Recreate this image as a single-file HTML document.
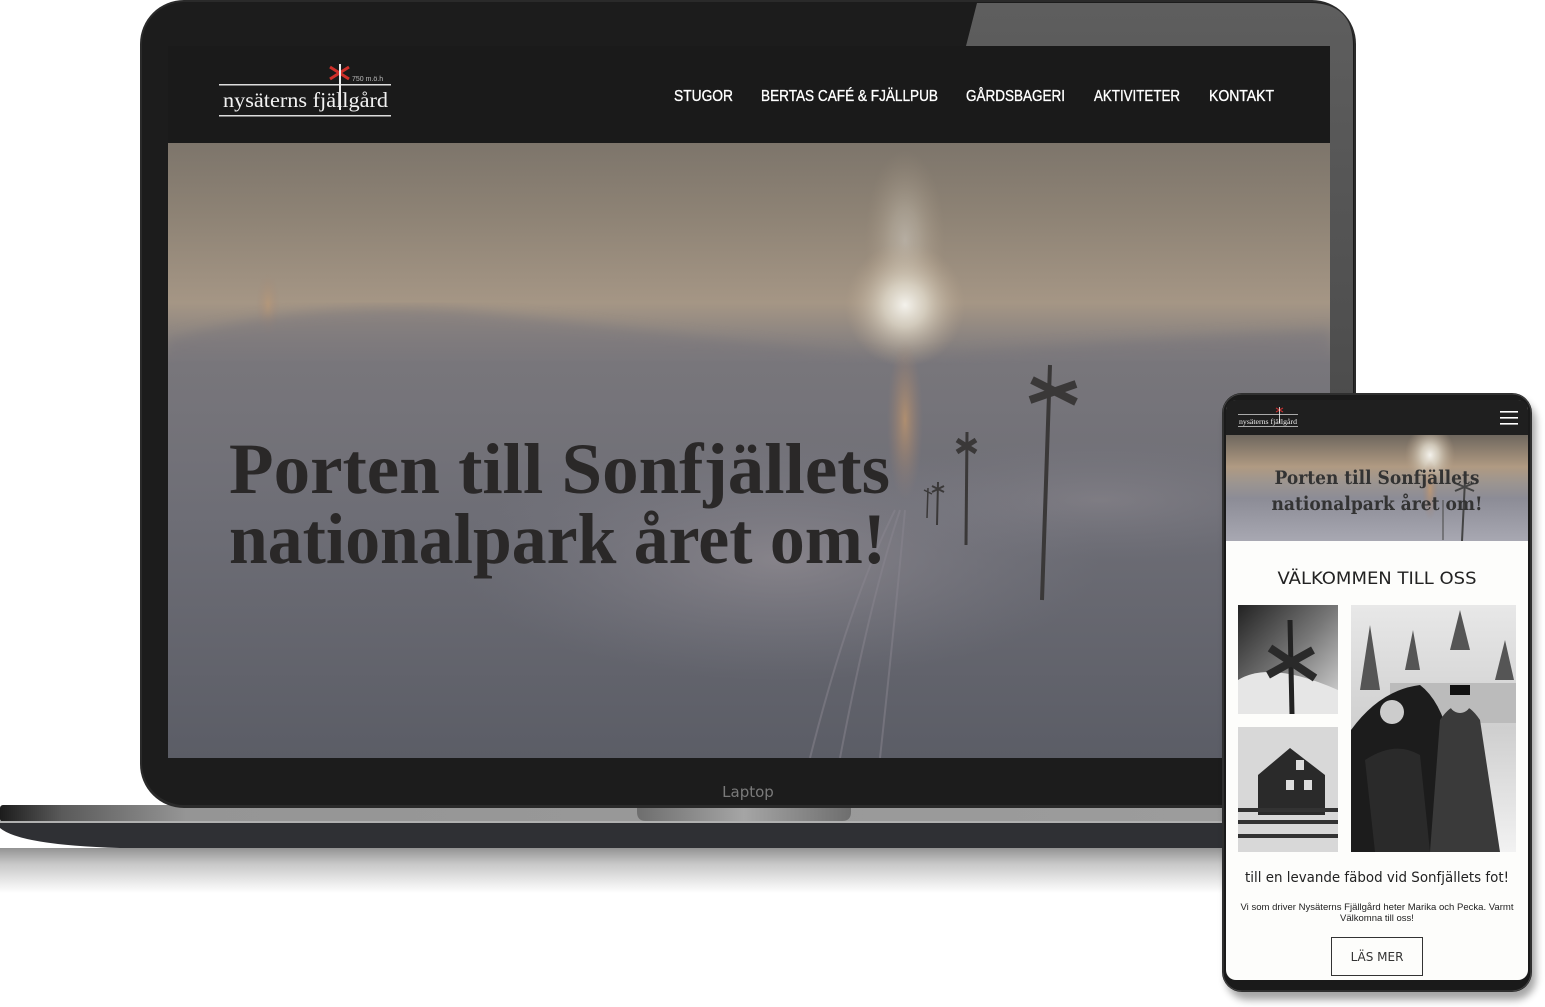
<!DOCTYPE html>
<html><head><meta charset="utf-8"><style>
html,body{margin:0;padding:0;background:#fff;width:1545px;height:1007px;overflow:hidden}
svg{display:block}
</style></head><body>
<svg width="1545" height="1007" viewBox="0 0 1545 1007" xmlns="http://www.w3.org/2000/svg">
<defs>
<linearGradient id="sky" x1="0" y1="0" x2="0" y2="1">
<stop offset="0" stop-color="#7d756b"/><stop offset="0.12" stop-color="#8e8375"/>
<stop offset="0.26" stop-color="#a59685"/><stop offset="0.31" stop-color="#8e8681"/>
<stop offset="0.36" stop-color="#78767b"/><stop offset="0.6" stop-color="#6e6e76"/>
<stop offset="1" stop-color="#5b5d66"/></linearGradient>
<radialGradient id="sun" cx="0.5" cy="0.5" r="0.5"><stop offset="0" stop-color="#f4f2ec"/><stop offset="0.35" stop-color="#dcd5c6" stop-opacity="0.85"/><stop offset="1" stop-color="#b8a48c" stop-opacity="0"/></radialGradient>
<radialGradient id="pillar" cx="0.5" cy="0.5" r="0.5"><stop offset="0" stop-color="#c89a6c" stop-opacity="0.7"/><stop offset="1" stop-color="#a08070" stop-opacity="0"/></radialGradient>
<radialGradient id="snow" cx="0.5" cy="0.5" r="0.5"><stop offset="0" stop-color="#9a949a" stop-opacity="0.6"/><stop offset="1" stop-color="#80808a" stop-opacity="0"/></radialGradient>
<linearGradient id="base" x1="0" y1="0" x2="1" y2="0"><stop offset="0" stop-color="#1c1c1c"/><stop offset="0.05" stop-color="#5a5a5a"/><stop offset="0.15" stop-color="#959595"/><stop offset="1" stop-color="#9c9c9c"/></linearGradient>
<linearGradient id="notch" x1="0" y1="0" x2="1" y2="0"><stop offset="0" stop-color="#6e6e6e"/><stop offset="0.5" stop-color="#a5a5a5"/><stop offset="1" stop-color="#6e6e6e"/></linearGradient>
<linearGradient id="refl" x1="0" y1="0" x2="0" y2="1"><stop offset="0" stop-color="#3a3a3a"/><stop offset="0.35" stop-color="#9a9a9a"/><stop offset="1" stop-color="#ffffff"/></linearGradient>
<linearGradient id="glare" x1="0" y1="0" x2="0" y2="1"><stop offset="0" stop-color="#5e5e5e"/><stop offset="1" stop-color="#3a3a3a"/></linearGradient>
<linearGradient id="psky" x1="0" y1="0" x2="0" y2="1"><stop offset="0" stop-color="#6f675e"/><stop offset="0.3" stop-color="#b09a82"/><stop offset="0.45" stop-color="#9c9590"/><stop offset="0.6" stop-color="#8c8c96"/><stop offset="1" stop-color="#a8a8b2"/></linearGradient>
<linearGradient id="ph1" x1="0" y1="0" x2="1" y2="1"><stop offset="0" stop-color="#222"/><stop offset="0.5" stop-color="#777"/><stop offset="1" stop-color="#ddd"/></linearGradient>
<linearGradient id="ph2" x1="0" y1="0" x2="0" y2="1"><stop offset="0" stop-color="#e8e8e8"/><stop offset="0.5" stop-color="#cfcfcf"/><stop offset="1" stop-color="#f2f2f2"/></linearGradient>
<filter id="blur"><feGaussianBlur stdDeviation="6"/></filter>
<filter id="sh"><feGaussianBlur stdDeviation="4"/></filter>
<clipPath id="hero"><rect x="168" y="143" width="1162" height="615"/></clipPath>
<clipPath id="phero"><rect x="1226" y="435" width="302" height="106"/></clipPath>
</defs>

<path d="M0 822 L1240 822 L1240 848 L120 848 Q20 845 0 828 Z" fill="#2f3034"/>
<rect x="0" y="848" width="1240" height="45" fill="url(#refl)" opacity="0.55"/>
<rect x="0" y="805" width="1240" height="17" rx="3" fill="url(#base)"/>
<rect x="0" y="821" width="1240" height="2" fill="#b0b0b0"/>
<path d="M637 805 L851 805 L851 812 Q851 821 842 821 L646 821 Q637 821 637 812 Z" fill="url(#notch)"/>

<rect x="140" y="0" width="1216" height="808" rx="44" fill="#2a2a2a"/>
<rect x="142" y="2" width="1212" height="803" rx="42" fill="#1c1c1c"/>
<path d="M977 3 L1310 3 Q1353 3 1353 46 L1353 805 L1330 805 L1330 46 L966 46 Z" fill="url(#glare)"/>
<rect x="168" y="46" width="1162" height="712" fill="#1a1a1a"/>
<text x="748" y="797" text-anchor="middle" font-family="DejaVu Sans, sans-serif" font-size="15" fill="#7a7a7a">Laptop</text>

<g font-family="Liberation Sans, sans-serif" font-size="16" fill="#fff" stroke="#fff" stroke-width="0.35">
<text x="674" y="101" textLength="59" lengthAdjust="spacingAndGlyphs">STUGOR</text>
<text x="761" y="101" textLength="177" lengthAdjust="spacingAndGlyphs">BERTAS CAFÉ &amp; FJÄLLPUB</text>
<text x="966" y="101" textLength="99" lengthAdjust="spacingAndGlyphs">GÅRDSBAGERI</text>
<text x="1094" y="101" textLength="86" lengthAdjust="spacingAndGlyphs">AKTIVITETER</text>
<text x="1209" y="101" textLength="65" lengthAdjust="spacingAndGlyphs">KONTAKT</text>
</g>
<g>
<rect x="219" y="84" width="172" height="1.5" fill="#ddd"/>
<rect x="219" y="115" width="172" height="1.5" fill="#ddd"/>
<text x="223" y="107" font-family="Liberation Serif, serif" font-size="21" fill="#f2f2f2" textLength="165" lengthAdjust="spacingAndGlyphs">nysäterns fjällgård</text>
<path d="M330 67 L349 79 M349 67 L330 79" stroke="#d0302a" stroke-width="3"/>
<rect x="339" y="64" width="2" height="46" fill="#eee"/>
<text x="352" y="81" font-family="Liberation Sans, sans-serif" font-size="7" fill="#bbb">750 m.ö.h</text>
</g>

<g clip-path="url(#hero)">
<rect x="168" y="143" width="1162" height="615" fill="url(#sky)"/>
<ellipse cx="905" cy="240" rx="40" ry="90" fill="url(#sun)" opacity="0.35"/>
<ellipse cx="905" cy="305" rx="60" ry="62" fill="url(#sun)"/>
<ellipse cx="905" cy="420" rx="18" ry="80" fill="url(#pillar)"/>
<ellipse cx="268" cy="305" rx="12" ry="32" fill="url(#pillar)" opacity="0.6"/>
<path d="M168 340 Q300 300 460 310 Q650 330 900 360 Q1100 340 1330 330 L1330 360 L168 360 Z" fill="#77757b" opacity="0.5" filter="url(#blur)"/>
<ellipse cx="780" cy="560" rx="320" ry="120" fill="url(#snow)"/>
<ellipse cx="1100" cy="500" rx="250" ry="60" fill="url(#snow)" opacity="0.6"/>
<path d="M810 758 Q850 600 895 510 M840 758 Q870 600 900 510 M880 758 Q895 620 905 510" stroke="#8a8690" stroke-width="2" fill="none" opacity="0.5"/>
<g stroke="#3a3838" fill="none">
<path d="M1050 365 L1042 600" stroke-width="4"/>
<path d="M1032 380 L1076 402 M1030 400 L1076 384" stroke-width="8"/>
<path d="M967 432 L966 545" stroke-width="3"/>
<path d="M957 440 L976 452 M957 452 L976 440" stroke-width="5"/>
<path d="M938 482 L937 525 M932 486 L944 492 M932 492 L944 486" stroke-width="2"/>
<path d="M928 488 L927 518 M924 490 L932 494" stroke-width="1.5"/>
</g>
<g font-family="Liberation Serif, serif" font-weight="bold" font-size="72" fill="#2a2828">
<text x="229" y="493" textLength="661" lengthAdjust="spacingAndGlyphs">Porten till Sonfjällets</text>
<text x="229" y="563" textLength="657" lengthAdjust="spacingAndGlyphs">nationalpark året om!</text>
</g>
</g>

<rect x="1226" y="400" width="310" height="600" rx="22" fill="#000" opacity="0.35" filter="url(#sh)"/>
<rect x="1222" y="393" width="310" height="599" rx="20" fill="#1a1a1a"/>
<rect x="1223" y="394" width="308" height="597" rx="19" fill="none" stroke="#444" stroke-width="1"/>
<rect x="1226" y="400" width="302" height="580" rx="10" fill="#fdfdfb"/>
<path d="M1226 410 Q1226 400 1236 400 L1518 400 Q1528 400 1528 410 L1528 435 L1226 435 Z" fill="#1f1f1f"/>
<rect x="1238" y="414" width="60" height="0.8" fill="#ccc"/>
<rect x="1238" y="426" width="60" height="0.8" fill="#ccc"/>
<text x="1239" y="424" font-family="Liberation Serif, serif" font-size="7.5" fill="#eee" textLength="58" lengthAdjust="spacingAndGlyphs">nysäterns fjällgård</text>
<path d="M1276 408 L1283 412 M1283 408 L1276 412" stroke="#c03030" stroke-width="1.2"/>
<rect x="1279" y="407" width="0.8" height="16" fill="#eee"/>
<g fill="#fff"><rect x="1500" y="411" width="18" height="1.6"/><rect x="1500" y="417" width="18" height="1.6"/><rect x="1500" y="423" width="18" height="1.6"/></g>
<g clip-path="url(#phero)">
<rect x="1226" y="435" width="302" height="106" fill="url(#psky)"/>
<ellipse cx="1430" cy="455" rx="25" ry="30" fill="url(#sun)"/>
<ellipse cx="1430" cy="490" rx="8" ry="30" fill="url(#pillar)"/>
<path d="M1465 480 L1462 541 M1455 483 L1474 491 M1455 491 L1474 483" stroke="#444" stroke-width="2" fill="none"/>
<path d="M1443 500 L1443 540" stroke="#555" stroke-width="1.2"/>
<text x="1377" y="484" text-anchor="middle" font-family="DejaVu Serif, serif" font-weight="bold" font-size="19" fill="#333" textLength="205" lengthAdjust="spacingAndGlyphs">Porten till Sonfjällets</text>
<text x="1377" y="510" text-anchor="middle" font-family="DejaVu Serif, serif" font-weight="bold" font-size="19" fill="#333" textLength="211" lengthAdjust="spacingAndGlyphs">nationalpark året om!</text>
</g>
<text x="1377" y="584" text-anchor="middle" font-family="DejaVu Sans, sans-serif" font-size="17" fill="#222" textLength="199" lengthAdjust="spacingAndGlyphs">VÄLKOMMEN TILL OSS</text>
<rect x="1238" y="605" width="100" height="109" fill="url(#ph1)"/>
<path d="M1238 714 L1238 680 Q1270 660 1338 690 L1338 714 Z" fill="#e6e6e6"/>
<path d="M1290 620 L1292 714" stroke="#222" stroke-width="5"/>
<path d="M1270 648 L1315 678 M1268 675 L1313 650" stroke="#2a2a2a" stroke-width="8"/>
<rect x="1238" y="727" width="100" height="125" fill="#d8d8d8"/>
<path d="M1258 775 L1290 748 L1325 775 L1325 815 L1258 815 Z" fill="#2a2a2a"/>
<path d="M1238 810 L1338 810 M1238 822 L1338 822 M1238 836 L1338 836" stroke="#333" stroke-width="4"/>
<rect x="1296" y="760" width="8" height="10" fill="#ddd"/><rect x="1286" y="780" width="8" height="10" fill="#ddd"/><rect x="1304" y="780" width="8" height="10" fill="#ddd"/>
<rect x="1351" y="605" width="165" height="247" fill="url(#ph2)"/>
<path d="M1360 690 L1370 625 L1380 690 Z M1405 670 L1413 630 L1420 670 Z M1450 650 L1460 610 L1470 650 Z M1495 680 L1505 640 L1514 680 Z" fill="#555"/>
<rect x="1390" y="683" width="126" height="40" fill="#bbb"/>
<path d="M1351 730 Q1380 690 1420 685 Q1440 700 1450 740 L1460 852 L1351 852 Z" fill="#1c1c1c"/>
<path d="M1365 760 Q1395 740 1420 755 L1430 852 L1375 852 Z" fill="#2a2a2a"/>
<circle cx="1392" cy="712" r="12" fill="#ccc"/>
<path d="M1440 720 Q1460 690 1480 720 L1500 852 L1430 852 Z" fill="#3a3a3a"/>
<circle cx="1460" cy="702" r="11" fill="#bbb"/>
<rect x="1450" y="685" width="20" height="10" fill="#111"/>
<text x="1377" y="882" text-anchor="middle" font-family="DejaVu Sans, sans-serif" font-size="14" fill="#222" textLength="264" lengthAdjust="spacingAndGlyphs">till en levande fäbod vid Sonfjällets fot!</text>
<text x="1377" y="910" text-anchor="middle" font-family="Liberation Sans, sans-serif" font-size="9.5" fill="#222" textLength="273" lengthAdjust="spacingAndGlyphs">Vi som driver Nysäterns Fjällgård heter Marika och Pecka. Varmt</text>
<text x="1377" y="921" text-anchor="middle" font-family="Liberation Sans, sans-serif" font-size="9.5" fill="#222">Välkomna till oss!</text>
<rect x="1331.5" y="937.5" width="91" height="38" fill="none" stroke="#333" stroke-width="1"/>
<text x="1377" y="961" text-anchor="middle" font-family="DejaVu Sans, sans-serif" font-size="12" fill="#333">LÄS MER</text>
</svg>
</body></html>
